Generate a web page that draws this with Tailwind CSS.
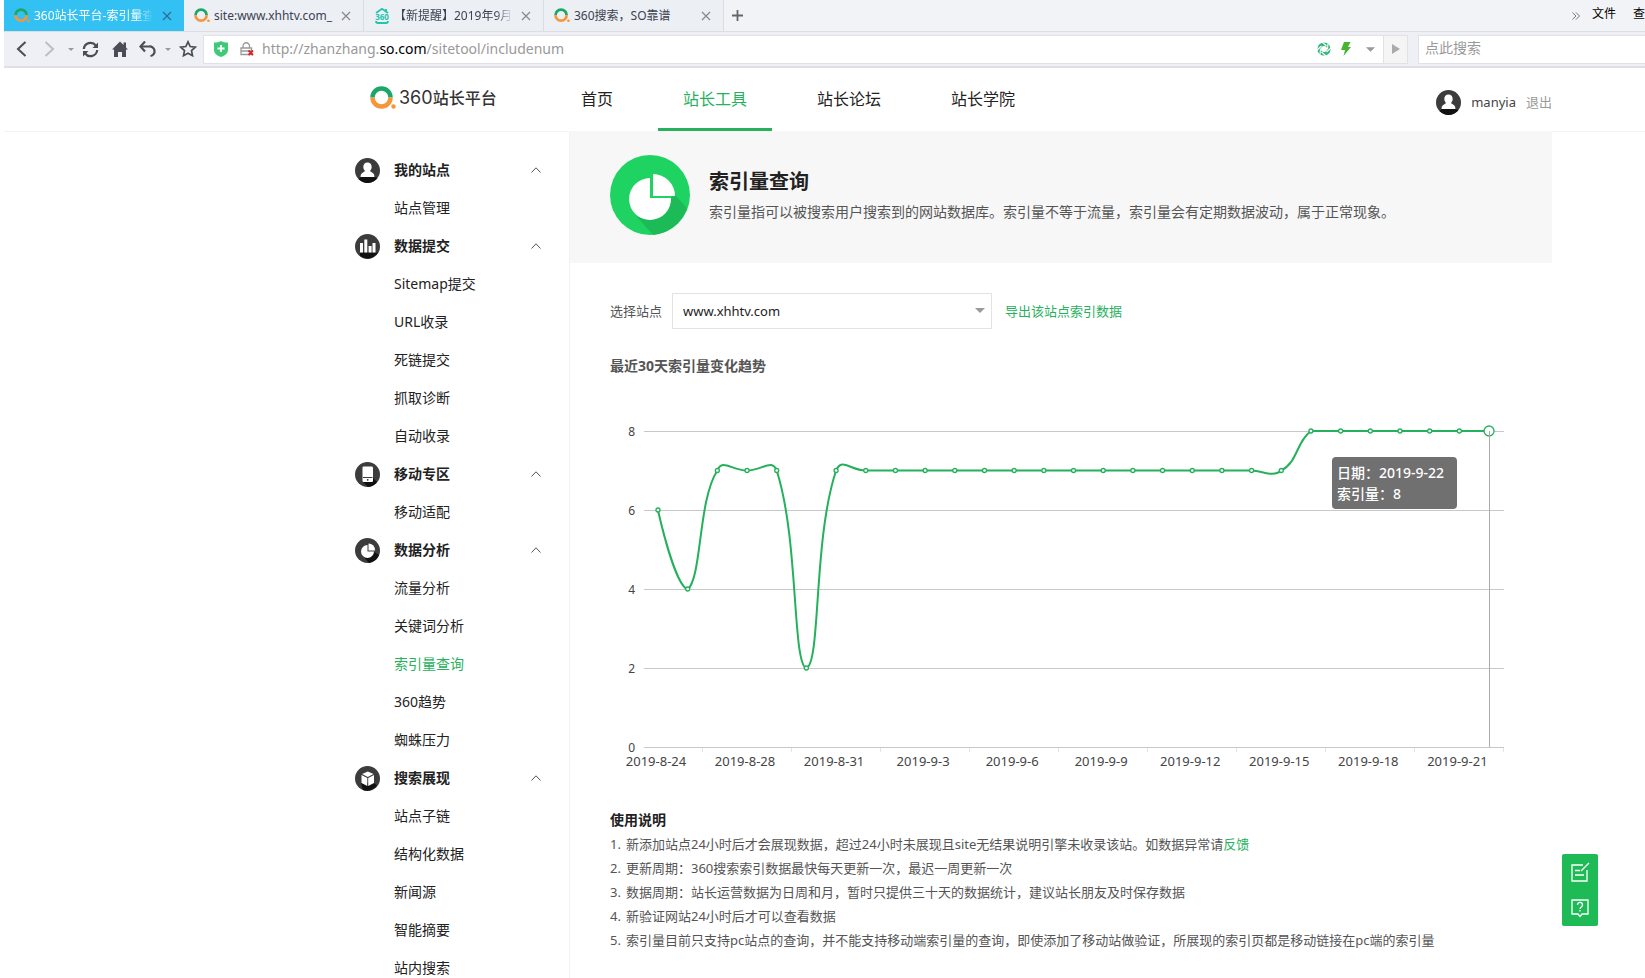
<!DOCTYPE html>
<html lang="zh-CN">
  <head>
    <meta charset="utf-8" />
    <meta name="viewport" content="width=device-width, initial-scale=1.0" />
    <title>360站长平台-索引量查询</title>
    <script src="https://cdn.jsdelivr.net/npm/@tailwindcss/browser@4"></script>
  </head>
  <body class="min-h-screen overflow-hidden bg-white pl-1 font-['Noto_Sans','Noto_Sans_CJK_SC',sans-serif] text-sm text-[#222]">
    <!-- shared icons -->
    <svg class="hidden">
      <symbol id="logo" viewBox="0 0 26 24">
        <path d="M2.500 11.500a9 9 0 0 1 18 0" fill="none" stroke="#1ba765" stroke-width="4.500" />
        <path d="M2.500 11.500a9 9 0 0 0 18 0" fill="none" stroke="#f7953b" stroke-width="4.500" />
        <circle cx="23.500" cy="20.500" r="2.200" fill="#f7953b" />
      </symbol>
      <symbol id="close" viewBox="0 0 10 10">
        <path d="M1 1l8 8M9 1l-8 8" fill="none" stroke="currentColor" stroke-width="1.200" />
      </symbol>
      <symbol id="caret" viewBox="0 0 10 5">
        <path d="M0 0h10L5 5z" fill="currentColor" />
      </symbol>
      <symbol id="up" viewBox="0 0 10 6">
        <path d="M.5 5.500L5 .8l4.500 4.700" fill="none" stroke="#555" />
      </symbol>
      <symbol id="user" viewBox="0 0 25 25">
        <circle cx="12.500" cy="12.500" r="12.500" fill="#3c3c3c" />
        <path d="M6 19h13l3.500 1A12.500 12.500 0 0 1 3.500 21z" fill="#111" />
        <path d="M12.500 4.500c2.700 0 4.200 2 4.200 4.500 0 1.800-.9 3-1.800 3.900l3.200 2.400c1 .8 1.300 2 1.300 3.700H5.600c0-1.700.3-2.900 1.300-3.700l3.200-2.400c-.9-.9-1.800-2.100-1.800-3.900 0-2.500 1.500-4.500 4.200-4.500z" fill="#fff" />
      </symbol>
    </svg>

    <!-- browser tabs -->
    <div class="flex h-8 items-stretch border-b border-[#dcdee2] bg-[#f1f3f6] text-xs text-[#3b4252]">
      <div class="flex w-[180px] items-center bg-[#33c1f4] pr-3 pl-[10px] text-white">
        <svg class="h-[15px] w-4 shrink-0"><use href="#logo" /></svg>
        <span class="ml-1 w-[119px] overflow-hidden whitespace-nowrap mask-r-from-85%">360站长平台-索引量查询</span>
        <button class="ml-auto text-[#2a6d8e]" aria-label="关闭"><svg class="size-[10px]"><use href="#close" /></svg></button>
      </div>
      <div class="flex w-[180px] items-center border-r border-[#d9dce1] bg-[#eceff4] pr-3 pl-[10px]">
        <svg class="h-[15px] w-4 shrink-0"><use href="#logo" /></svg>
        <span class="ml-1 w-[119px] overflow-hidden whitespace-nowrap">site:www.xhhtv.com_</span>
        <button class="ml-auto text-[#888]" aria-label="关闭"><svg class="size-[10px]"><use href="#close" /></svg></button>
      </div>
      <div class="flex w-[180px] items-center border-r border-[#d9dce1] bg-[#eceff4] pr-3 pl-[10px]">
        <svg class="size-4 shrink-0" viewBox="0 0 16 16">
          <path d="M2 5L8 .8 14 5M12 1v3M2 13c0 1.500.8 2 2 2h8c1.200 0 2-.5 2-2" fill="none" stroke="#21c5ad" stroke-width="1.800" />
          <text x="8" y="11.500" text-anchor="middle" font-size="8" font-weight="700" fill="#21c5ad">360</text>
        </svg>
        <span class="ml-1 w-[119px] overflow-hidden whitespace-nowrap mask-r-from-85%">【新提醒】2019年9月</span>
        <button class="ml-auto text-[#888]" aria-label="关闭"><svg class="size-[10px]"><use href="#close" /></svg></button>
      </div>
      <div class="flex w-[180px] items-center border-r border-[#d9dce1] bg-[#eceff4] pr-3 pl-[10px]">
        <svg class="h-[15px] w-4 shrink-0"><use href="#logo" /></svg>
        <span class="ml-1 w-[119px] overflow-hidden whitespace-nowrap">360搜索，SO靠谱</span>
        <button class="ml-auto text-[#888]" aria-label="关闭"><svg class="size-[10px]"><use href="#close" /></svg></button>
      </div>
      <button class="px-2" aria-label="新标签页">
        <svg class="size-[11px]" viewBox="0 0 11 11"><path d="M5.500 0v11M0 5.500h11" stroke="#666" stroke-width="1.800" /></svg>
      </button>
      <div class="-mr-3 ml-auto flex items-center text-xs whitespace-nowrap text-black">
        <svg class="mr-3 h-2 w-[8px]" viewBox="0 0 8 8"><path d="M.5.500L4 4 .5 7.500M4 .5L7.500 4 4 7.500" fill="none" stroke="#777" /></svg>
        <button class="mr-[17px] pb-1">文件</button>
        <button class="pb-1">查看</button>
      </div>
    </div>

    <!-- browser toolbar -->
    <div class="flex h-9 items-center border-b-2 border-[#dfe0e4] bg-[#eef0f5]">
      <div class="flex w-[199px] items-center pl-3 text-[#4a4d55]">
        <button class="w-7" aria-label="后退"><svg class="h-4 w-[11px]" viewBox="0 0 11 16"><path d="M9.500 1L2 8l7.500 7" fill="none" stroke="currentColor" stroke-width="2" /></svg></button>
        <button class="w-6" aria-label="前进"><svg class="h-4 w-[11px]" viewBox="0 0 11 16"><path d="M1.500 1L9 8l-7.500 7" fill="none" stroke="#bbbec4" stroke-width="2" /></svg></button>
        <svg class="mr-2 h-[3px] w-[6px] text-[#999]"><use href="#caret" /></svg>
        <button class="w-[30px]" aria-label="刷新">
          <svg class="size-[17px]" viewBox="0 0 17 17">
            <path d="M1.800 8a6.700 6.700 0 0 1 12-3.500M15.200 9a6.700 6.700 0 0 1-12 3.500" fill="none" stroke="currentColor" stroke-width="2.200" />
            <path d="M16 1.500v5.500h-5.500zM1 15.500V10h5.500z" fill="currentColor" />
          </svg>
        </button>
        <button class="w-[27px]" aria-label="主页"><svg class="size-4" viewBox="0 0 16 16"><path d="M8 .5L0 8.500h2V16h4v-5h4v5h4V8.500h2l-2-2V1.500h-2.500V4z" fill="currentColor" /></svg></button>
        <button class="w-[26px]" aria-label="撤销"><svg class="size-[17px]" viewBox="0 0 17 17"><path d="M2 5.500h8a4.500 4.500 0 0 1 1.500 9.500" fill="none" stroke="currentColor" stroke-width="2.200" /><path d="M6 .5L1.500 5.500l4.500 5" fill="none" stroke="currentColor" stroke-width="2.200" /></svg></button>
        <svg class="mr-2 h-[3px] w-[6px] text-[#999]"><use href="#caret" /></svg>
        <button aria-label="收藏"><svg class="size-[18px]" viewBox="0 0 18 18"><path d="M9 1.800l2.200 4.700 5.100.6-3.800 3.500 1 5.100L9 13.200l-4.500 2.500 1-5.100L1.700 7.100l5.100-.6z" fill="none" stroke="currentColor" stroke-width="1.700" /></svg></button>
      </div>
      <div class="flex h-[29px] flex-1 items-center border border-[#e0e2e6] bg-white pl-[10px]">
        <svg class="h-4 w-[14px]" viewBox="0 0 14 16"><path d="M0 1.500C3 1.500 5 1 7 0c2 1 4 1.500 7 1.500V9c0 3.500-3.500 6-7 7-3.500-1-7-3.500-7-7z" fill="#3ecb78" /><path d="M7 4v7M3.500 7.500h7" stroke="#fff" stroke-width="2" /></svg>
        <svg class="ml-3 size-[14px]" viewBox="0 0 14 14">
          <path d="M3 6V4a3 3 0 0 1 6.500 0v2M1 6h10.500v6.500H1zM1 9h10" fill="none" stroke="#999" stroke-width="1.300" />
          <path d="M8.500 8.500l4.500 4.500M13 8.500L8.500 13" stroke="#e02020" stroke-width="1.800" />
        </svg>
        <span class="ml-2 flex-1 text-sm text-[#999]">http://zhanzhang.<span class="text-black">so.com</span>/sitetool/includenum</span>
        <svg class="size-[14px]" viewBox="0 0 14 14"><circle cx="7" cy="7" r="4.800" fill="none" stroke="#34b57c" stroke-width="3.600" /><path d="M5 0l4.500 4M11 1.500L10.500 7.500M14 6l-4.500 4M9 14l-4.500-4M3 12.500l.5-6M0 8l4.500-4" stroke="#fff" stroke-width="1.100" /></svg>
        <svg class="ml-[10px] h-[14px] w-[10px]" viewBox="0 0 10 14"><path d="M3 0h6.500L7 5h3L2.500 14l1.500-6H0z" fill="#4ab32f" /></svg>
        <svg class="mr-2 ml-[15px] h-[5px] w-[9px] text-[#999]"><use href="#caret" /></svg>
        <button class="flex h-full w-6 items-center justify-center border-l border-[#e0e2e6] bg-[#f5f5f6]" aria-label="转到"><svg class="h-[10px] w-2" viewBox="0 0 8 10"><path d="M0 0l8 5-8 5z" fill="#aaa" /></svg></button>
      </div>
      <input type="text" aria-label="搜索" placeholder="点此搜索" class="ml-[10px] h-[29px] w-[227px] border border-r-0 border-[#e0e2e6] bg-white pb-[3px] pl-[6px] text-sm placeholder:text-[#999]" />
    </div>

    <!-- site header -->
    <header class="border-b border-[#f3f3f3] pr-[93px] pl-[366px]">
      <div class="flex h-[63px] items-center">
        <a href="#" class="mb-1 flex w-[186px] items-center text-[#333]">
          <svg class="h-6 w-[26px]"><use href="#logo" /></svg>
          <span class="ml-[3px] font-[Inter] text-[18px] leading-6">360</span>
          <span class="text-base leading-6 font-medium">站长平台</span>
        </a>
        <nav class="flex h-full gap-5 text-base leading-[62px]">
          <a href="#" class="px-[25px]">首页</a>
          <a href="#" class="border-b-3 border-[#27b15c] px-[25px] text-[#27b15c]">站长工具</a>
          <a href="#" class="px-[25px]">站长论坛</a>
          <a href="#" class="px-[25px]">站长学院</a>
        </nav>
        <div class="mt-[6px] ml-auto flex items-center">
          <svg class="size-[25px]"><use href="#user" /></svg>
          <a href="#" class="ml-[10px] text-[13px] text-[#444]">manyia</a>
          <a href="#" class="ml-[10px] text-[13px] text-[#999]">退出</a>
        </div>
      </div>
    </header>

    <div class="flex pr-[93px] pl-[351px]">
      <!-- sidebar -->
      <aside class="w-[215px] shrink-0 border-r border-[#f3f3f3] pt-[19px] leading-[38px]">
        <h3 class="flex items-center font-bold">
          <svg class="mr-[14px] size-[25px]"><use href="#user" /></svg>我的站点
          <svg class="mr-7 ml-auto h-[6px] w-[10px]"><use href="#up" /></svg>
        </h3>
        <ul class="pl-[39px]">
          <li><a href="#">站点管理</a></li>
        </ul>
        <h3 class="flex items-center font-bold">
          <svg class="mr-[14px] size-[25px]" viewBox="0 0 25 25">
            <circle cx="12.500" cy="12.500" r="12.500" fill="#3c3c3c" />
            <path d="M5 18.500h18A12.500 12.500 0 0 1 5 22z" fill="#111" />
            <path d="M5 9h3v9.500H5zM9.300 5.500h3v13h-3zM13.600 12h3v6.500h-3zM17.500 9h3v9.500h-3z" fill="#fff" />
          </svg>数据提交
          <svg class="mr-7 ml-auto h-[6px] w-[10px]"><use href="#up" /></svg>
        </h3>
        <ul class="pl-[39px]">
          <li><a href="#">Sitemap提交</a></li>
          <li><a href="#">URL收录</a></li>
          <li><a href="#">死链提交</a></li>
          <li><a href="#">抓取诊断</a></li>
          <li><a href="#">自动收录</a></li>
        </ul>
        <h3 class="flex items-center font-bold">
          <svg class="mr-[14px] size-[25px]" viewBox="0 0 25 25">
            <circle cx="12.500" cy="12.500" r="12.500" fill="#3c3c3c" />
            <path d="M17 15l5 5a12.500 12.500 0 0 1-9 5l-5-5z" fill="#111" />
            <rect x="7.500" y="4.500" width="10.500" height="15.500" rx="1.200" fill="#fff" />
            <path d="M8 15.500h9.500" stroke="#3c3c3c" /><circle cx="12.700" cy="17.800" r=".9" fill="#333" />
          </svg>移动专区
          <svg class="mr-7 ml-auto h-[6px] w-[10px]"><use href="#up" /></svg>
        </h3>
        <ul class="pl-[39px]">
          <li><a href="#">移动适配</a></li>
        </ul>
        <h3 class="flex items-center font-bold">
          <svg class="mr-[14px] size-[25px]" viewBox="0 0 25 25">
            <circle cx="12.500" cy="12.500" r="12.500" fill="#3c3c3c" />
            <path d="M19 14l5 3a12.500 12.500 0 0 1-10 8l-5-6z" fill="#111" />
            <path d="M12.500 7v6.500H19A6.500 6.500 0 1 1 12.500 7z" fill="#fff" />
            <path d="M13.500 5.500a6.500 6.500 0 0 1 6.500 7h-6.500z" fill="#fff" />
          </svg>数据分析
          <svg class="mr-7 ml-auto h-[6px] w-[10px]"><use href="#up" /></svg>
        </h3>
        <ul class="pl-[39px]">
          <li><a href="#">流量分析</a></li>
          <li><a href="#">关键词分析</a></li>
          <li><a href="#" class="text-[#27b15c]">索引量查询</a></li>
          <li><a href="#">360趋势</a></li>
          <li><a href="#">蜘蛛压力</a></li>
        </ul>
        <h3 class="flex items-center font-bold">
          <svg class="mr-[14px] size-[25px]" viewBox="0 0 25 25">
            <circle cx="12.500" cy="12.500" r="12.500" fill="#3c3c3c" />
            <path d="M6 17h13l3 2.500a12.500 12.500 0 0 1-14 4.500z" fill="#111" />
            <path d="M12.800 5.500l5.700 2.600-5.700 2.900-5.700-2.900zM6.500 9l5.800 3v8l-5.800-3zM19 9l-5.800 3v8l5.800-3z" fill="#fff" />
          </svg>搜索展现
          <svg class="mr-7 ml-auto h-[6px] w-[10px]"><use href="#up" /></svg>
        </h3>
        <ul class="pl-[39px]">
          <li><a href="#">站点子链</a></li>
          <li><a href="#">结构化数据</a></li>
          <li><a href="#">新闻源</a></li>
          <li><a href="#">智能摘要</a></li>
          <li><a href="#">站内搜索</a></li>
        </ul>
      </aside>

      <main class="min-w-0 flex-1 text-[#555]">
        <section class="-mt-px flex h-[132px] items-start bg-[#f7f7f7] pt-6 pl-10">
          <svg class="size-20" viewBox="0 0 80 80">
            <circle cx="40" cy="40" r="40" fill="#1fd362" />
            <path d="M65 40l12 13A40 40 0 0 1 43 80L27 62z" fill="#1cbb57" />
            <path d="M40 23v20h21A21 21 0 1 1 40 23z" fill="#fff" />
            <path d="M43 19a22 22 0 0 1 22 22H43z" fill="#fff" />
          </svg>
          <div class="ml-[19px] pt-3">
            <h1 class="text-xl leading-[30px] font-bold text-[#222]">索引量查询</h1>
            <p class="mt-[3px] leading-6">索引量指可以被搜索用户搜索到的网站数据库。索引量不等于流量，索引量会有定期数据波动，属于正常现象。</p>
          </div>
        </section>

        <div class="pl-10">
          <div class="flex items-center pt-[30px] text-[13px]">
            <label for="site" class="mr-[10px]">选择站点</label>
            <div class="relative">
              <select id="site" class="h-9 w-[320px] appearance-none border border-[#e3e3e3] bg-white px-[10px] text-[13px] text-[#222]">
                <option>www.xhhtv.com</option>
              </select>
              <svg class="pointer-events-none absolute top-[15px] right-[7px] h-[5px] w-[10px] text-[#999]"><use href="#caret" /></svg>
            </div>
            <a href="#" class="ml-[13px] text-[#27b15c]">导出该站点索引数据</a>
          </div>

          <h2 class="mt-[25px] leading-6 font-bold">最近30天索引量变化趋势</h2>

          <div class="relative mt-[22px]">
            <svg id="chart" class="w-full" viewBox="0 0 942 375" font-size="13" fill="#444">
              <g id="axis" stroke="#c8c8c8" stroke-width="1"></g>
              <path
                d="M48 110.500C56 145 68 186 77.700 189.500C92 177 88 100 107.400 70.500C112 58 122 70.500 137 70.500C152 70.500 162 58 166.700 70.500C189 140 182 262 196.400 268.500C211 262 203 140 226.100 70.500C232 57 240 70.500 255.800 70.500H641.600C652 70.500 663 78 671.300 70.500C688 62 686 42 701 31H879"
                fill="none" stroke="#25b05c" stroke-width="2" />
              <g id="dots" fill="#fff" stroke="#25b05c" stroke-width="1.300"></g>
              <path d="M879.500 31v316" stroke="#aaa" />
              <g id="labels"></g>
            </svg>
            <div class="absolute top-[57px] left-[722px] h-[52px] w-[125px] rounded bg-[#707070] px-[5px] py-[5px] leading-[21px] font-medium text-white">
              日期：2019-9-22<br />索引量：8
            </div>
          </div>

          <section class="mt-[33px] text-[13px] leading-6">
            <h4 class="text-sm leading-6 font-bold text-[#222]">使用说明</h4>
            <ol>
              <li class="flex"><span class="w-4">1.</span>新添加站点24小时后才会展现数据，超过24小时未展现且site无结果说明引擎未收录该站。如数据异常请<a href="#" class="text-[#27b15c]">反馈</a></li>
              <li class="flex"><span class="w-4">2.</span>更新周期：360搜索索引数据最快每天更新一次，最迟一周更新一次</li>
              <li class="flex"><span class="w-4">3.</span>数据周期：站长运营数据为日周和月，暂时只提供三十天的数据统计，建议站长朋友及时保存数据</li>
              <li class="flex"><span class="w-4">4.</span>新验证网站24小时后才可以查看数据</li>
              <li class="flex"><span class="w-4">5.</span>索引量目前只支持pc站点的查询，并不能支持移动端索引量的查询，即使添加了移动站做验证，所展现的索引页都是移动链接在pc端的索引量</li>
            </ol>
          </section>
        </div>
      </main>
    </div>

    <!-- floating buttons -->
    <div class="fixed right-[47px] bottom-[52px] flex h-[72px] w-9 flex-col items-center justify-around rounded-xs bg-[#1dba55]">
      <button aria-label="反馈">
        <svg class="size-5" viewBox="0 0 20 20" fill="none" stroke="#fff" stroke-width="1.300"><path d="M13 3H2v16h15V8M5 8.500h5M5 13h9M11 9l8-8" /></svg>
      </button>
      <button aria-label="帮助">
        <svg class="size-5" viewBox="0 0 20 20" fill="none" stroke="#fff" stroke-width="1.300"><path d="M2 2h16v14h-6l-2 2.500L8 16H2zM7.500 7c0-3.500 5-3.500 5 0 0 2-2.500 2-2.500 4M10 12v1.500" /></svg>
      </button>
    </div>

    <script>
      var values = [6, 4, 7, 7, 7, 2, 7, 7, 7, 7, 7, 7, 7, 7, 7, 7, 7, 7, 7, 7, 7, 7, 8, 8, 8, 8, 8, 8, 8];
      var dates = ["2019-8-24", "2019-8-28", "2019-8-31", "2019-9-3", "2019-9-6", "2019-9-9", "2019-9-12", "2019-9-15", "2019-9-18", "2019-9-21"];
      var step = 29.68;
      var axis = "";
      var dots = "";
      var labels = "";

      for (var v = 0; v <= 8; v += 2) {
        var y = 347.5 - v * 39.5;
        axis += '<path d="M34 ' + y + 'H894" />';
        labels += '<text x="25" y="' + (y + 4) + '" text-anchor="end" font-size="12">' + v + "</text>";
      }

      values.forEach(function (value, i) {
        var last = i === values.length - 1;
        dots += '<circle cx="' + (48 + i * step) + '" cy="' + (347 - value * 39.5) + '" r="' + (last ? 5 : 2) + '" />';
      });

      dates.forEach(function (date, i) {
        labels += '<text x="' + (46 + i * 3 * step) + '" y="366" text-anchor="middle">' + date + "</text>";
        axis += '<path d="M' + (92.5 + i * 89) + ' 348v4" stroke="#e4e4e4" />';
      });

      document.getElementById("axis").innerHTML = axis;
      document.getElementById("dots").innerHTML = dots;
      document.getElementById("labels").innerHTML = labels;
    </script>
  </body>
</html>
